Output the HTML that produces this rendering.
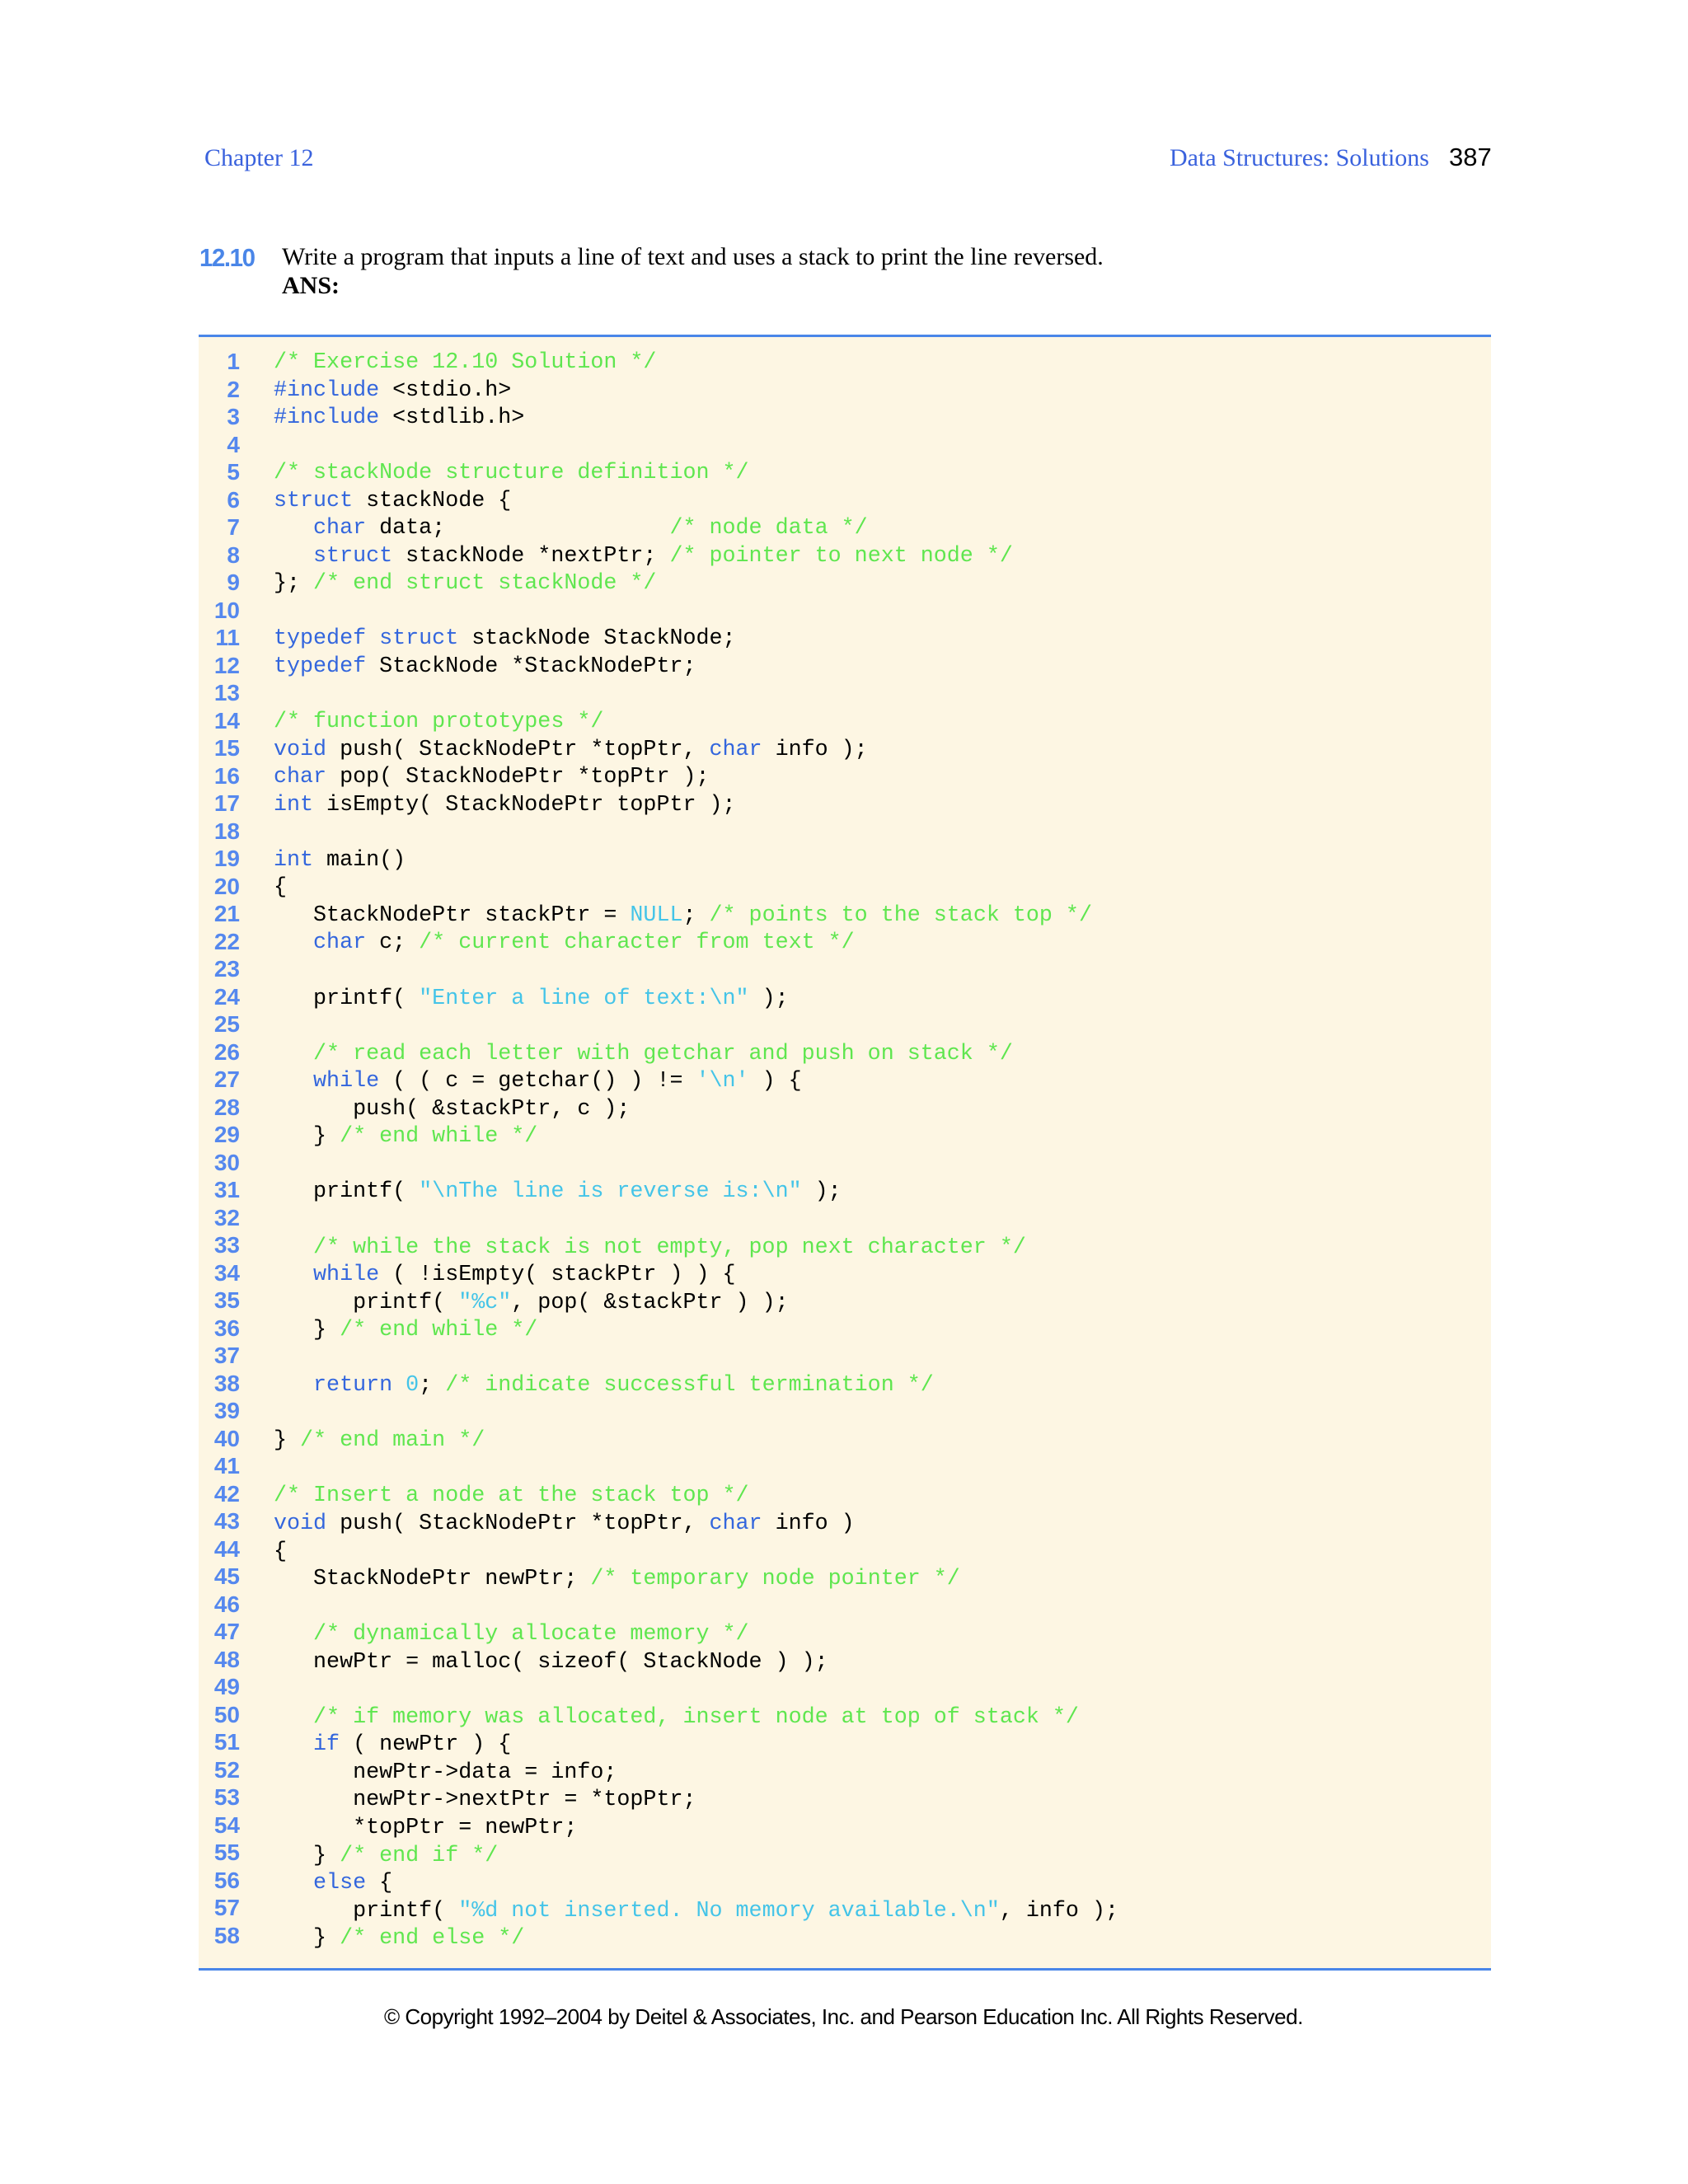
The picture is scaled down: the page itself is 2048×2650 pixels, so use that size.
<!DOCTYPE html>
<html><head><meta charset="utf-8"><style>
body{margin:0;background:#fff;width:2048px;height:2650px;position:relative;overflow:hidden}
.a{position:absolute;white-space:pre}
.serif{font-family:"Liberation Serif",serif}
.sans{font-family:"Liberation Sans",sans-serif}
#box{position:absolute;left:241px;top:406px;width:1568px;height:1985px;background:#fdf6e3;border-top:3px solid #4a86e8;border-bottom:3px solid #4a86e8;box-sizing:border-box}
#nums{position:absolute;left:200px;top:422px;width:91px;text-align:right;font-family:"Liberation Sans",sans-serif;font-weight:bold;font-size:28px;line-height:33.5px;color:#5588ee;white-space:pre}
#code{position:absolute;left:332px;top:424px;margin:0;font-family:"Liberation Mono",monospace;font-size:26.7px;line-height:33.55px;color:#000;white-space:pre}
.k{color:#3366dd}.c{color:#5fe64f}.s{color:#44c4e8}
</style></head><body>
<div class="a serif" style="left:248px;top:175px;font-size:30px;color:#3a62dd">Chapter 12</div>
<div class="a serif" style="left:1419px;top:175px;font-size:30px;color:#3a62dd">Data Structures: Solutions</div>
<div class="a sans" style="left:1758px;top:173px;font-size:31px;color:#000">387</div>
<div class="a sans" style="left:242px;top:295px;font-size:31px;color:#4a86e8;letter-spacing:-1.5px;font-weight:bold;transform:scaleX(0.95);transform-origin:left">12.10</div>
<div class="a serif" style="left:342px;top:295px;font-size:30px;color:#000">Write a program that inputs a line of text and uses a stack to print the line reversed.</div>
<div class="a serif" style="left:342px;top:330px;font-size:30px;font-weight:bold;color:#000">ANS:</div>
<div id="box"></div>
<div id="nums">1
2
3
4
5
6
7
8
9
10
11
12
13
14
15
16
17
18
19
20
21
22
23
24
25
26
27
28
29
30
31
32
33
34
35
36
37
38
39
40
41
42
43
44
45
46
47
48
49
50
51
52
53
54
55
56
57
58</div>
<pre id="code"><span class="c">/* Exercise 12.10 Solution */</span>
<span class="k">#include</span> &lt;stdio.h&gt;
<span class="k">#include</span> &lt;stdlib.h&gt;

<span class="c">/* stackNode structure definition */</span>
<span class="k">struct</span> stackNode {
   <span class="k">char</span> data;                 <span class="c">/* node data */</span>
   <span class="k">struct</span> stackNode *nextPtr; <span class="c">/* pointer to next node */</span>
}; <span class="c">/* end struct stackNode */</span>

<span class="k">typedef</span> <span class="k">struct</span> stackNode StackNode;
<span class="k">typedef</span> StackNode *StackNodePtr;

<span class="c">/* function prototypes */</span>
<span class="k">void</span> push( StackNodePtr *topPtr, <span class="k">char</span> info );
<span class="k">char</span> pop( StackNodePtr *topPtr );
<span class="k">int</span> isEmpty( StackNodePtr topPtr );

<span class="k">int</span> main()
{
   StackNodePtr stackPtr = <span class="s">NULL</span>; <span class="c">/* points to the stack top */</span>
   <span class="k">char</span> c; <span class="c">/* current character from text */</span>

   printf( <span class="s">"Enter a line of text:\n"</span> );

   <span class="c">/* read each letter with getchar and push on stack */</span>
   <span class="k">while</span> ( ( c = getchar() ) != <span class="s">'\n'</span> ) {
      push( &amp;stackPtr, c );
   } <span class="c">/* end while */</span>

   printf( <span class="s">"\nThe line is reverse is:\n"</span> );

   <span class="c">/* while the stack is not empty, pop next character */</span>
   <span class="k">while</span> ( !isEmpty( stackPtr ) ) {
      printf( <span class="s">"%c"</span>, pop( &amp;stackPtr ) );
   } <span class="c">/* end while */</span>

   <span class="k">return</span> <span class="s">0</span>; <span class="c">/* indicate successful termination */</span>

} <span class="c">/* end main */</span>

<span class="c">/* Insert a node at the stack top */</span>
<span class="k">void</span> push( StackNodePtr *topPtr, <span class="k">char</span> info )
{
   StackNodePtr newPtr; <span class="c">/* temporary node pointer */</span>

   <span class="c">/* dynamically allocate memory */</span>
   newPtr = malloc( sizeof( StackNode ) );

   <span class="c">/* if memory was allocated, insert node at top of stack */</span>
   <span class="k">if</span> ( newPtr ) {
      newPtr-&gt;data = info;
      newPtr-&gt;nextPtr = *topPtr;
      *topPtr = newPtr;
   } <span class="c">/* end if */</span>
   <span class="k">else</span> {
      printf( <span class="s">"%d not inserted. No memory available.\n"</span>, info );
   } <span class="c">/* end else */</span></pre>
<div class="a sans" style="left:466px;top:2432px;font-size:26px;color:#000;letter-spacing:-0.5px">© Copyright 1992–2004 by Deitel &amp; Associates, Inc. and Pearson Education Inc. All Rights Reserved.</div>
</body></html>
